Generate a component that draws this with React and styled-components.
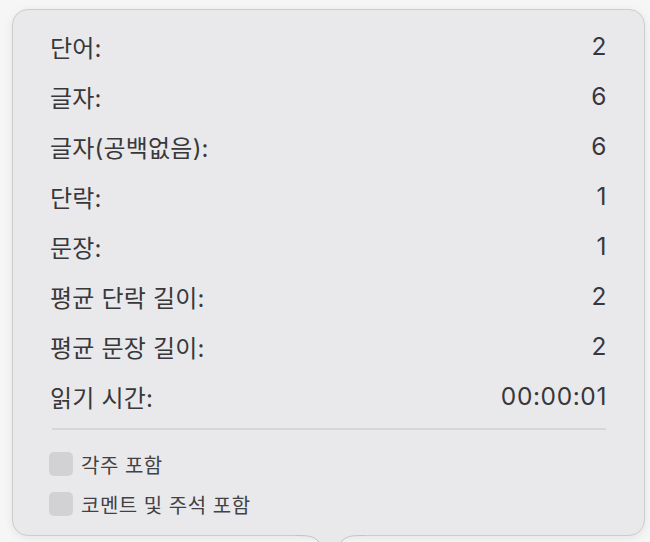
import React from 'react'
import styled, { createGlobalStyle } from 'styled-components'

const GlobalStyle = createGlobalStyle`
  html, body {
    margin: 0;
    padding: 0;
    background: #f6f6f6;
  }
  body {
    font-family: Inter, "Noto Sans CJK KR", sans-serif;
    color: #3b3b3e;
    overflow: hidden;
  }
`

const stats = [
  { label: '단어:', value: '2' },
  { label: '글자:', value: '6' },
  { label: '글자(공백없음):', value: '6' },
  { label: '단락:', value: '1' },
  { label: '문장:', value: '1' },
  { label: '평균 단락 길이:', value: '2' },
  { label: '평균 문장 길이:', value: '2' },
  { label: '읽기 시간:', value: '00:00:01' },
]

const options = ['각주 포함', '코멘트 및 주석 포함']

const App = () => {
  return (
    <Page>
      <GlobalStyle />
      <Popover>
        <StatList>
          {stats.map((s) => (
            <StatRow key={s.label}>
              <Label>{s.label}</Label>
              <Value>{s.value}</Value>
            </StatRow>
          ))}
        </StatList>
        <Divider />
        <Options>
          {options.map((o) => (
            <Option key={o}>
              <Box />
              <OptionText>{o}</OptionText>
            </Option>
          ))}
        </Options>
        <Arrow width="70" height="20" viewBox="0 0 70 20">
          <path
            d="M0 0.5 C 14 0.5, 18 1, 23 6 L 35 18 L 47 6 C 52 1, 56 0.5, 70 0.5 L 70 0 L 0 0 Z"
            fill="#e9e9ec"
          />
          <path
            d="M0 0.5 C 14 0.5, 18 1, 23 6 L 35 18 L 47 6 C 52 1, 56 0.5, 70 0.5"
            fill="none"
            stroke="#c4c4c6"
            strokeWidth="1"
          />
        </Arrow>
      </Popover>
    </Page>
  )
}

const Page = styled.div`
  width: 650px;
  height: 542px;
  padding: 9px 5px 0 12px;
  box-sizing: border-box;
`

const Popover = styled.div`
  position: relative;
  width: 633px;
  height: 527px;
  box-sizing: border-box;
  background: #e9e9ec;
  border: 1px solid #cdcdcf;
  border-radius: 16px;
  box-shadow: 0 2px 10px rgba(0, 0, 0, 0.08);
  padding: 11px 37px 11px 36px;
  display: flex;
  flex-direction: column;
`

const StatList = styled.div`
  display: flex;
  flex-direction: column;
`

const StatRow = styled.div`
  height: 50px;
  display: flex;
  align-items: center;
  justify-content: space-between;
  padding-left: 1px;
`

const Label = styled.span`
  font-size: 24px;
  letter-spacing: 0.2px;
  color: #38383b;
`

const Value = styled.span`
  font-size: 24.5px;
  color: #38383b;
  letter-spacing: 0.6px;
`

const Divider = styled.div`
  height: 2px;
  background: #d6d6d9;
  margin: 7px 1px 14px 3px;
`

const Options = styled.div`
  display: flex;
  flex-direction: column;
`

const Option = styled.label`
  height: 40px;
  display: flex;
  align-items: center;
  gap: 8px;
`

const Box = styled.span`
  width: 24px;
  height: 24px;
  border-radius: 5px;
  background: #d2d2d5;
  box-sizing: border-box;
`

const OptionText = styled.span`
  font-size: 20px;
  color: #424245;
  letter-spacing: 0.5px;
`

const Arrow = styled.svg`
  position: absolute;
  left: 282px;
  bottom: -20px;
`

export default App
